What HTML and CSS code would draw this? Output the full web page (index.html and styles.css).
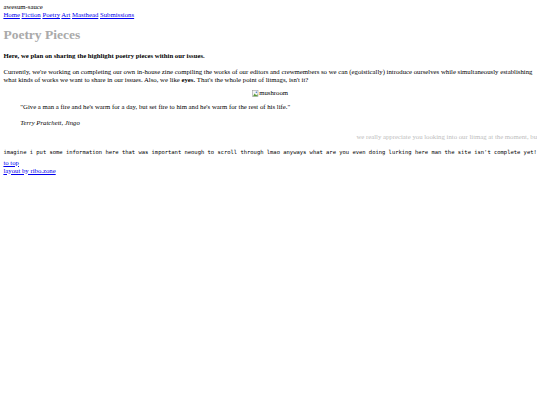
FILE: index.html
```html
<!DOCTYPE html>
<html>
<head>
<meta charset="utf-8">
<link rel="stylesheet" href="styles.css">
</head>
<body>
<div class="site-title">awesum-sauce</div>
<nav class="nav"><a href="#">Home</a> <a href="#">Fiction</a> <a href="#">Poetry</a> <a href="#">Art</a> <a href="#">Masthead</a> <a href="#">Submissions</a></nav>
<h1 class="page-title">Poetry Pieces</h1>
<h4 class="lede">Here, we plan on sharing the highlight poetry pieces within our issues.</h4>
<p class="intro">Currently, we're working on completing our own in-house zine compiling the works of our editors and crewmembers so we can (egoistically) introduce ourselves while simultaneously establishing what kinds of works we want to share in our issues. Also, we like <b>eyes.</b> That's the whole point of litmags, isn't it?</p>
<p class="figure"><span class="broken"><svg width="7" height="7" viewBox="0 0 7 7"><rect x="0.5" y="0.5" width="5.5" height="6" fill="#f4f4f4" stroke="#a0a0a0" stroke-width="0.6"/><path d="M1 6.2 L2.6 3.6 L4.2 5.2 L5.6 4.2 L5.6 6.2 Z" fill="#5a9a3a"/><circle cx="4.4" cy="2.2" r="0.8" fill="#4a7fd0"/></svg>mushroom</span></p>
<blockquote class="quote">
<p class="quote-text">"Give a man a fire and he's warm for a day, but set fire to him and he's warm for the rest of his life."</p>
<p class="cite">Terry Pratchett, Jingo</p>
</blockquote>
<div class="ticker"><span>we really appreciate you looking into our litmag at the moment, but please bear with us</span></div>
<pre class="note">imagine i put some information here that was important neough to scroll through lmao anyways what are you even doing lurking here man the site isn't complete yet!!</pre>
<div class="footer"><a href="#">to top</a><br><a href="#">layout by ribo.zone</a></div>
</body>
</html>
```
FILE: styles.css
```css
html { overflow: hidden; }
body {
  margin: 3.4px;
  font-family: "Liberation Serif", serif;
  font-size: 6.75px;
  line-height: 8px;
  color: #000;
  background: #fff;
}
a { color: #0000ee; }
.page-title {
  font-size: 13.5px;
  line-height: 16px;
  color: #aaaaaa;
  margin: 8px 0 9px;
}
.lede {
  font-size: 6.75px;
  margin: 9px 0 8px;
}
.intro { margin: 8px 0 4.75px; }
.figure { text-align: center; margin: 4.75px 0 3.75px; }
.broken { display: inline-flex; align-items: flex-end; }
.broken svg { display: block; margin-right: 0.3px; }
.quote { margin: 3.75px 16.9px 6px; }
.quote-text { margin: 3.75px 0 7.75px; }
.cite { font-style: italic; margin: 7.75px 0 6px; }
.ticker {
  overflow: hidden;
  white-space: nowrap;
  color: #bdbdbd;
  padding-left: 353px;
}
.note {
  font-family: "DejaVu Sans Mono", monospace;
  font-size: 5.48px;
  line-height: 7px;
  margin: 8.5px 0 2.5px;
  white-space: pre;
}
```
